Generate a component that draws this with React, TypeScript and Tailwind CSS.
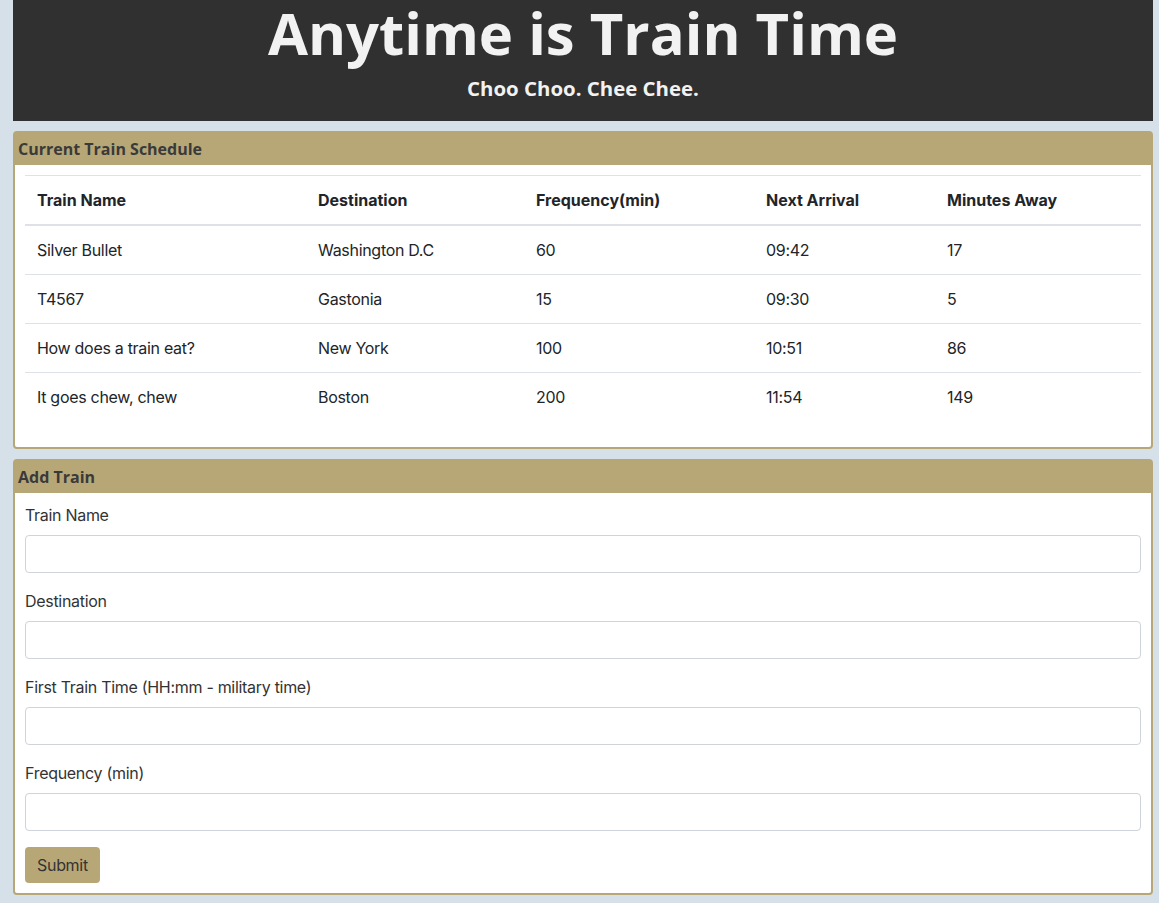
import React from "react";

const rows = [
  ["Silver Bullet", "Washington D.C", "60", "09:42", "17"],
  ["T4567", "Gastonia", "15", "09:30", "5"],
  ["How does a train eat?", "New York", "100", "10:51", "86"],
  ["It goes chew, chew", "Boston", "200", "11:54", "149"],
];

const widths = ["w-[281px]", "w-[218px]", "w-[230px]", "w-[181px]", "w-[206px]"];

function Field({ label }: { label: string }) {
  return (
    <div className="mb-[16px]">
      <label className="block text-[16px] leading-[24px] tracking-[-0.3px] text-[#333] mb-[8px]">{label}</label>
      <input className="block w-full h-[38px] border border-[#ced4da] rounded-[4px] bg-white px-3" />
    </div>
  );
}

export default function App() {
  return (
    <div className="min-h-[903px] bg-[#d6e0e8] pl-[13px] pr-[6px] pb-[8px]" style={{ fontFamily: "Inter, 'Liberation Sans', sans-serif" }}>
      <div className="bg-[#303030] h-[121px] flex flex-col items-center text-[#f2f2f2] pt-[2px]" style={{ fontFamily: "'Open Sans', sans-serif" }}>
        <h1 className="text-[58px] font-bold leading-[62px]">Anytime is Train Time</h1>
        <p className="text-[20.4px] font-bold leading-[28px] mt-[10px]">Choo Choo. Chee Chee.</p>
      </div>

      <div className="mt-[10px] border-2 border-[#b8a776] rounded-[4px] bg-white">
        <div className="bg-[#b8a776] h-[32px] px-[3px] flex items-center text-[16px] font-bold text-[#3a3a3a]" style={{ fontFamily: "'Open Sans', sans-serif" }}>
          Current Train Schedule
        </div>
        <div className="px-[10px] pt-[10px] pb-[10px]">
          <table className="w-full mb-[15px] text-[16px] text-[#212529] border-collapse">
            <thead>
              <tr className="border-t border-[#dee2e6] border-b-2">
                {["Train Name", "Destination", "Frequency(min)", "Next Arrival", "Minutes Away"].map((h, i) => (
                  <th key={h} className={`${widths[i]} text-left font-bold px-[12px] h-[49px] align-middle`}>{h}</th>
                ))}
              </tr>
            </thead>
            <tbody>
              {rows.map((r, ri) => (
                <tr key={ri} className={ri > 0 ? "border-t border-[#dee2e6]" : ""}>
                  {r.map((c, i) => (
                    <td key={i} className={`px-[12px] ${ri === 0 ? "h-[50px]" : "h-[49px]"} align-middle tracking-[-0.3px]`}>{c}</td>
                  ))}
                </tr>
              ))}
            </tbody>
          </table>
        </div>
      </div>

      <div className="mt-[10px] border-2 border-[#b8a776] rounded-[4px] bg-white">
        <div className="bg-[#b8a776] h-[32px] px-[3px] flex items-center text-[16px] font-bold text-[#3a3a3a]" style={{ fontFamily: "'Open Sans', sans-serif" }}>
          Add Train
        </div>
        <div className="px-[10px] pt-[10px] pb-[10px]">
          <Field label="Train Name" />
          <Field label="Destination" />
          <Field label="First Train Time (HH:mm - military time)" />
          <Field label="Frequency (min)" />
          <button className="bg-[#b8a776] text-[#333] text-[16px] leading-[24px] tracking-[-0.3px] px-[12px] py-[6px] rounded-[4px]">Submit</button>
        </div>
      </div>
    </div>
  );
}
